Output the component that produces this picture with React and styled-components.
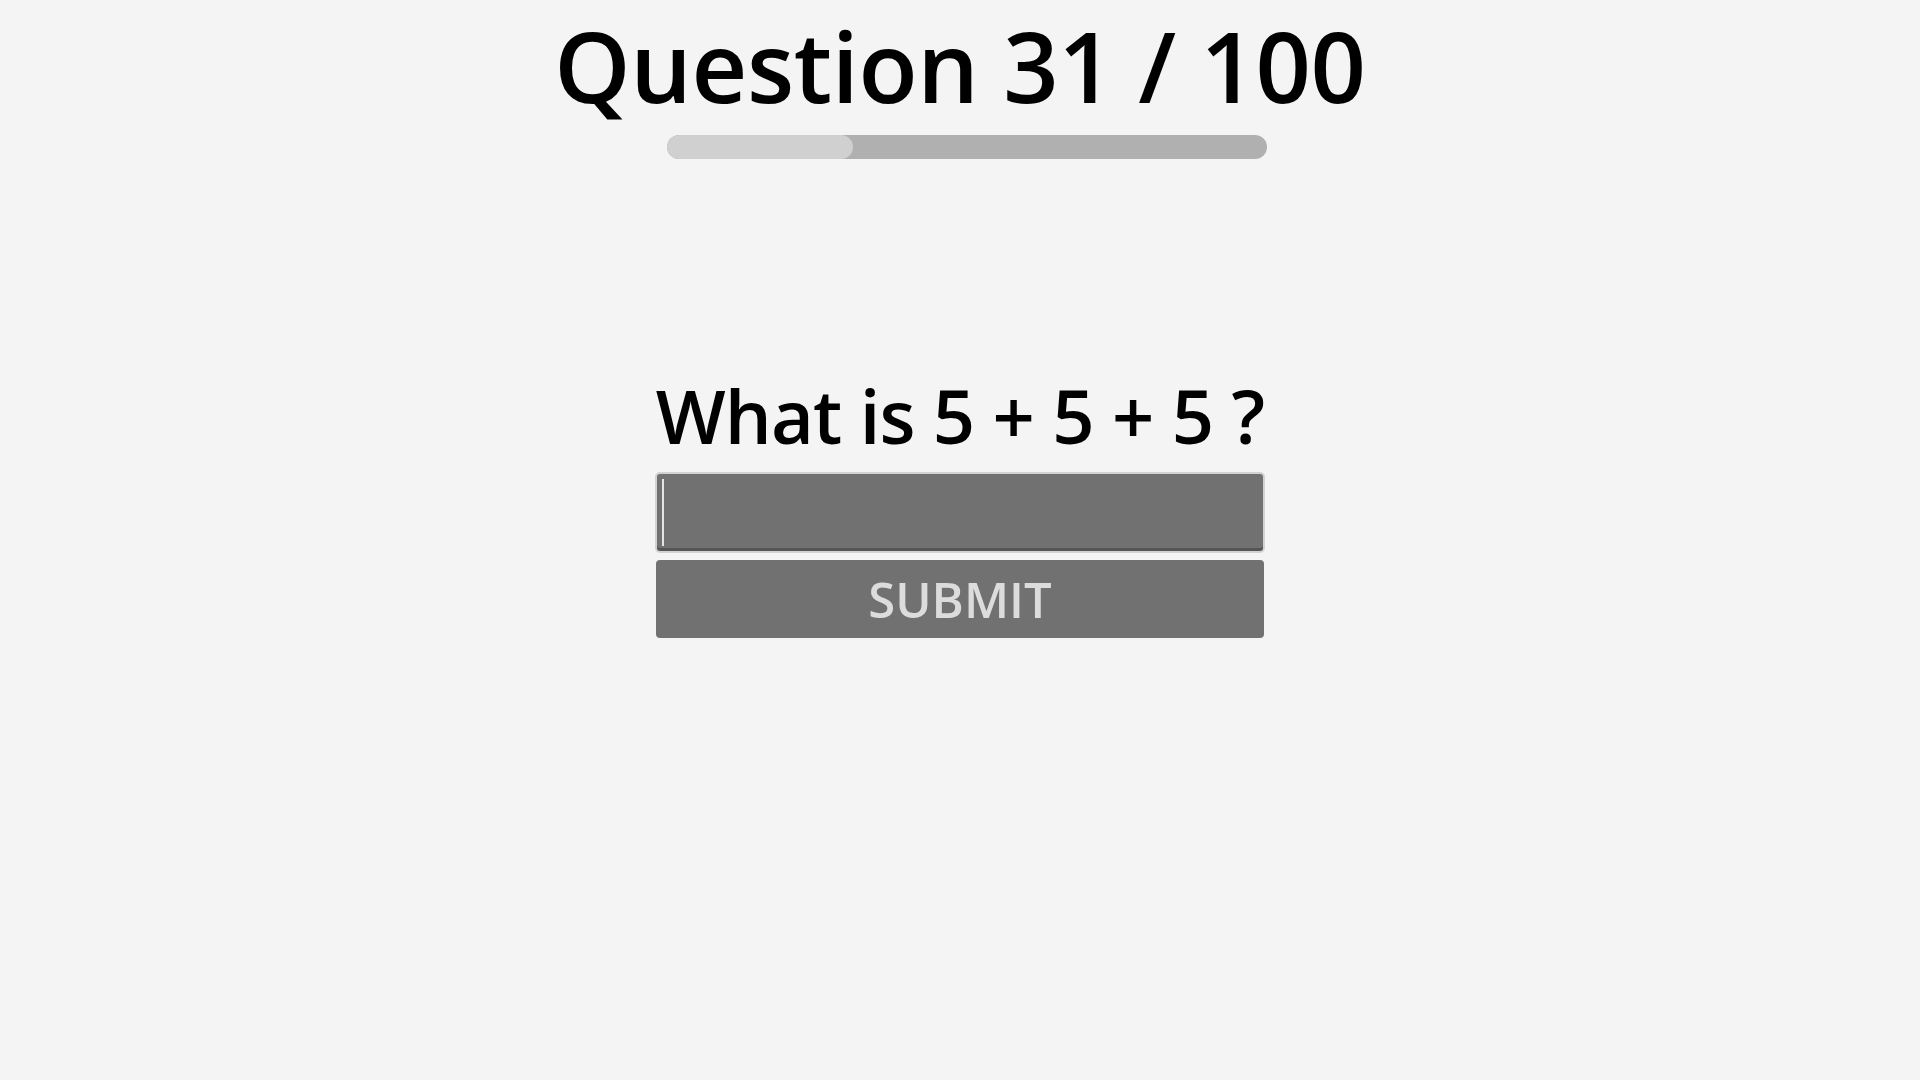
import { useState } from "react";
import styled, { createGlobalStyle } from "styled-components";

const GlobalStyle = createGlobalStyle`
  html, body {
    margin: 0;
    padding: 0;
    background: #f4f4f4;
    font-family: "Open Sans", "Noto Sans", sans-serif;
    color: #000;
  }
`;

const Page = styled.div`
  width: 100%;
  min-height: 1080px;
  display: flex;
  flex-direction: column;
  align-items: center;
`;

const Title = styled.h1`
  margin: 0;
  padding-top: 6px;
  font-size: 97px;
  line-height: 118px;
  font-weight: 600;
  letter-spacing: -0.4px;
`;

const Track = styled.div`
  margin-top: 11px;
  margin-left: 14px;
  width: 600px;
  height: 24px;
  border-radius: 12px;
  background: #b0b0b0;
  overflow: hidden;
`;

const Fill = styled.div`
  height: 100%;
  border-radius: 12px;
  background: #d0d0d0;
`;

const Quiz = styled.form`
  margin-top: 212px;
  display: flex;
  flex-direction: column;
  align-items: center;
`;

const Question = styled.h2`
  margin: 0;
  font-size: 74px;
  line-height: 90px;
  font-weight: 600;
  letter-spacing: -0.9px;
`;

const Field = styled.div`
  position: relative;
  margin-top: 11px;
`;

const Answer = styled.input`
  display: block;
  box-sizing: border-box;
  width: 610px;
  height: 81px;
  padding: 0 6px;
  border: 2px solid #d2d2d2;
  border-radius: 5px;
  background: #717171;
  box-shadow: inset 0 -3px 0 #555;
  color: #e8e8e8;
  caret-color: transparent;
  font-family: "Open Sans", sans-serif;
  font-size: 56px;
  outline: none;
`;

const Caret = styled.span`
  position: absolute;
  left: 7px;
  top: 7px;
  bottom: 7px;
  width: 2px;
  background: #e4e4e4;
  pointer-events: none;
`;

const Submit = styled.button`
  margin-top: 7px;
  width: 608px;
  height: 78px;
  border: none;
  border-radius: 4px;
  background: #717171;
  color: #dcdcdc;
  font-family: "Open Sans", sans-serif;
  font-size: 49px;
  font-weight: 600;
  line-height: 1;
  padding: 0;
  cursor: pointer;
`;

const App = () => {
  const [answer, setAnswer] = useState("");
  const current = 31;
  const total = 100;
  return (
    <>
      <GlobalStyle />
      <Page>
        <Title>
          Question {current} / {total}
        </Title>
        <Track>
          <Fill style={{ width: `${(current / total) * 100}%` }} />
        </Track>
        <Quiz onSubmit={(e) => e.preventDefault()}>
          <Question>What is 5 + 5 + 5 ?</Question>
          <Field>
            <Answer
              autoFocus
              value={answer}
              onChange={(e) => setAnswer(e.target.value)}
            />
            {answer === "" && <Caret />}
          </Field>
          <Submit type="submit">SUBMIT</Submit>
        </Quiz>
      </Page>
    </>
  );
};

export default App;
